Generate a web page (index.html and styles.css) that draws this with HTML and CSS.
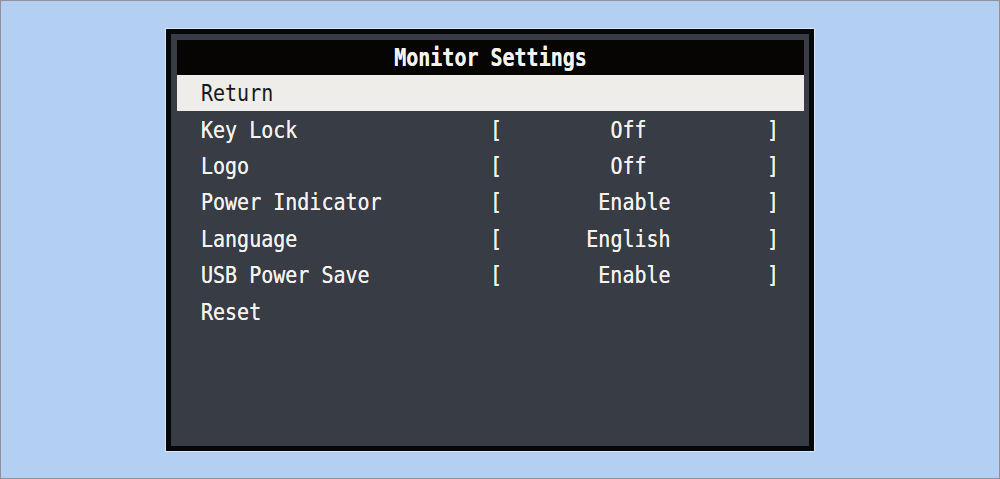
FILE: index.html
```html
<!DOCTYPE html>
<html lang="en">
<head>
<meta charset="utf-8">
<title>Monitor Settings</title>
<link rel="stylesheet" href="styles.css">
</head>
<body>
<div class="screen">
  <div class="osd">
    <div class="osd-inner">
      <div class="title"><span class="t">Monitor Settings</span></div>
      <div class="row selected"><span class="t label">Return</span></div>
      <div class="row"><span class="t label">Key Lock</span><span class="t br">[</span><span class="val"><span class="t p9">Off</span></span><span class="t br">]</span></div>
      <div class="row"><span class="t label">Logo</span><span class="t br">[</span><span class="val"><span class="t p9">Off</span></span><span class="t br">]</span></div>
      <div class="row"><span class="t label">Power Indicator</span><span class="t br">[</span><span class="val"><span class="t p8">Enable</span></span><span class="t br">]</span></div>
      <div class="row"><span class="t label">Language</span><span class="t br">[</span><span class="val"><span class="t p7">English</span></span><span class="t br">]</span></div>
      <div class="row"><span class="t label">USB Power Save</span><span class="t br">[</span><span class="val"><span class="t p8">Enable</span></span><span class="t br">]</span></div>
      <div class="row"><span class="t label">Reset</span></div>
    </div>
  </div>
</div>
</body>
</html>
```

FILE: styles.css
```css
* { box-sizing: border-box; }
html, body { margin: 0; padding: 0; }
body { background: #b3cff2; }

.screen {
  width: 1000px;
  height: 479px;
  border: 1px solid #8f9399;
  background: #b3cff2;
  padding: 27px 0 0 164px;
}

.osd {
  width: 650px;
  height: 424px;
  border: 1px solid #dbe7f6;
  background: #05070b;
  padding: 5px;
}

.osd-inner {
  height: 100%;
  background: #383c44;
  padding: 6px 5px 0 6px;
  font-family: "DejaVu Sans Mono", "Liberation Mono", monospace;
  font-size: 20px;
  color: #f5f1ef;
}

.t {
  display: inline-block;
  white-space: pre;
  transform: scaleY(1.15);
  text-shadow: 0 0 0.6px currentColor;
}

.title {
  height: 35px;
  line-height: 37px;
  background: #070504;
  text-align: center;
  font-weight: bold;
}
.title .t { transform: scaleY(1.2); }

.row {
  height: 36.4px;
  line-height: 36px;
  padding-left: 24px;
  display: flex;
  align-items: center;
}

.row.selected {
  background: #eeede9;
  color: #17171a;
}
.row.selected .t { text-shadow: none; }

.label { width: 289px; }
.br { width: 12.04px; }
.val { width: 264.9px; }
.p9 { padding-left: 108.4px; }
.p8 { padding-left: 96.3px; }
.p7 { padding-left: 84.3px; }
```
